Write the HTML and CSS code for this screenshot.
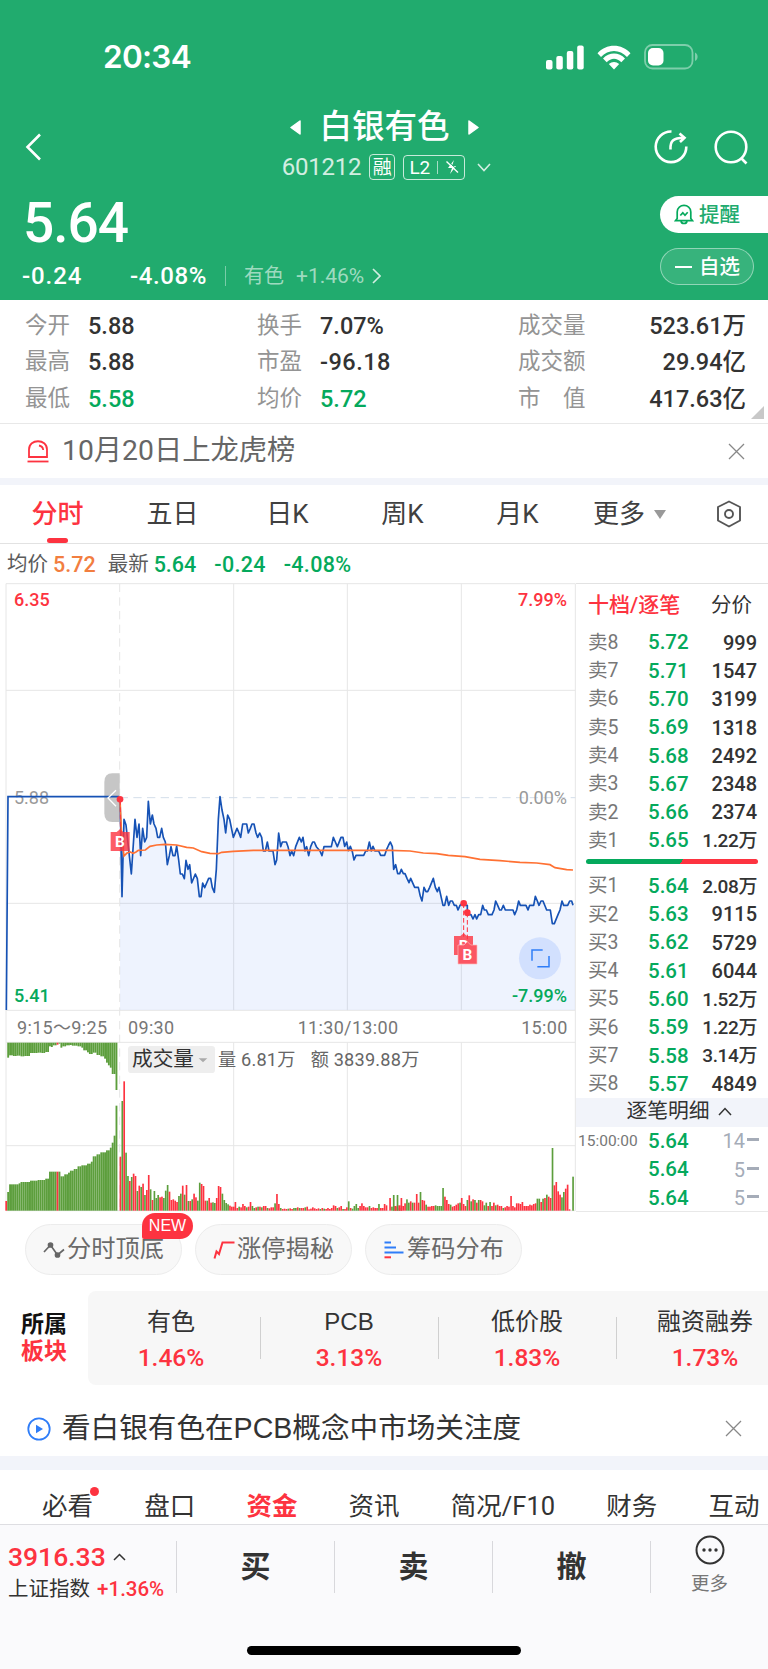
FILE: index.html
```html
<!DOCTYPE html>
<html lang="zh-CN">
  <head>
    <meta charset="UTF-8" />
    <title>白银有色 601212</title>
    <link rel="stylesheet" href="styles.css">
  </head>
  <body>
    <!-- 顶部行情 -->
    <header class="header">
      <div class="status-bar">
        <span class="clock">20:34</span>
        <div class="status-icons">
          <svg width="38" height="25" viewBox="0 0 38 25" fill="#fff">
            <rect x="0" y="15" width="6.5" height="9.5" rx="2" />
            <rect x="10.3" y="11" width="6.5" height="13.5" rx="2" />
            <rect x="20.8" y="6" width="6.5" height="18.5" rx="2" />
            <rect x="31.2" y="0.5" width="6.5" height="24" rx="2" />
          </svg>
          <svg width="34" height="25" viewBox="0 0 34 25" fill="#fff">
            <path d="M0.5 8.3 C9 -1.8 25 -1.8 33.5 8.3 L30 12 C23 4 11 4 4 12 Z" />
            <path d="M6 13.6 C12 6.8 22 6.8 28 13.6 L24.3 17.3 C20 12.6 14 12.6 9.7 17.3 Z" />
            <path d="M11.8 19 C15 16.2 19 16.2 22.2 19 L17 24.5 Z" />
          </svg>
          <svg width="54" height="26" viewBox="0 0 54 26">
            <rect x="1" y="1" width="47.5" height="23.5" rx="7.5" fill="none" stroke="#fff" stroke-opacity=".42" stroke-width="1.8" />
            <rect x="4" y="4" width="15.5" height="17.5" rx="5" fill="#fff" />
            <path d="M51 8.5 C54.5 10 54.5 15.5 51 17 Z" fill="#fff" fill-opacity=".42" />
          </svg>
        </div>
      </div>

      <div class="title-bar">
        <svg class="back" width="16" height="28" viewBox="0 0 16 28"><path d="M15 1.5 L2.500 14 L15 26.500" /></svg>
        <div class="title">
          <div class="name-row">
            <svg width="11" height="15" viewBox="0 0 11 15"><path d="M1 7.500 L10 1 V14 Z" fill="#fff" stroke="#fff" stroke-width="1.500" stroke-linejoin="round" /></svg>
            <h1>白银有色</h1>
            <svg width="11" height="15" viewBox="0 0 11 15"><path d="M10 7.500 L1 1 V14 Z" fill="#fff" stroke="#fff" stroke-width="1.500" stroke-linejoin="round" /></svg>
          </div>
          <div class="code-row">
            <span class="code">601212</span>
            <span class="tag">融</span>
            <span class="tag level">L2<i></i>
              <svg width="14" height="16" viewBox="0 0 14 16"><path d="M9 1 L3 9 H7 L5 15 L11 7 H7 Z" fill="#fff" /><path d="M1.500 2.500 L13 13.500" stroke="#fff" stroke-width="1.400" /><path d="M3 2 L13.500 12" stroke="#21ab6e" stroke-width="1" /></svg>
            </span>
            <svg class="chevron" width="14" height="9" viewBox="0 0 14 9"><path d="M1 1 L7 7.500 L13 1" /></svg>
          </div>
        </div>
        <div class="title-actions">
          <svg width="34" height="36" viewBox="0 0 34 36">
            <path d="M17.500 2.500 A15.300 15.300 0 1 0 32.300 17.500" />
            <path d="M16.500 20.500 C16 12 19 9 30 8.800" />
            <path d="M25.500 4.500 L30.500 8.800 L26 13" />
          </svg>
          <svg width="34" height="36" viewBox="0 0 34 36">
            <circle cx="17" cy="18" r="15.300" />
            <path d="M27 29 L32.500 34.500" />
          </svg>
        </div>
      </div>

      <div class="quote">
        <div class="quote-main">
          <div class="price">5.64</div>
          <div class="change">
            <span class="diff">-0.24</span>
            <span class="pct">-4.08%</span>
            <span class="industry">有色</span>
            <span class="industry-pct">+1.46%</span>
            <svg width="9" height="16" viewBox="0 0 9 16"><path d="M1 1 L8 8 L1 15" /></svg>
          </div>
        </div>
        <div class="quote-buttons">
          <button class="remind">
            <svg width="20" height="21" viewBox="0 0 20 21">
              <path d="M3.200 14.500 V8 C3.200 -0.800 16.800 -0.800 16.800 8 V14.500 L18.500 16.700 H1.500 Z" />
              <path d="M7 17 C7.500 20.300 12.500 20.300 13 17" />
              <path d="M6.300 11.500 L8.800 8.800 L11 11.300 L13.700 8.300" />
            </svg><span>提醒</span>
          </button>
          <button class="favorite"><i></i><span>自选</span></button>
        </div>
      </div>
    </header>

    <!-- 行情指标 -->
    <section class="stats">
      <span class="label">今开</span><span class="value">5.88</span>
      <span class="label">换手</span><span class="value">7.07%</span>
      <span class="label">成交量</span><span class="value right">523.61万</span>
      <span class="label">最高</span><span class="value">5.88</span>
      <span class="label">市盈</span><span class="value wide">-96.18</span>
      <span class="label">成交额</span><span class="value right">29.94亿</span>
      <span class="label">最低</span><span class="value green">5.58</span>
      <span class="label">均价</span><span class="value green">5.72</span>
      <span class="label">市　值</span><span class="value right">417.63亿</span>
    </section>

    <section class="notice">
      <svg width="22" height="23" viewBox="0 0 22 23" fill="none" stroke="#fd3340" stroke-width="1.800">
        <path d="M2 17 V9.500 C2 -1.500 20 -1.500 20 9.500 V17 Z" />
        <path d="M0.500 21.500 H21.500" />
        <path d="M12 5.500 C14.500 6 16 7.500 16.200 10" />
      </svg>
      <span>10月20日上龙虎榜</span>
      <svg class="close" width="17" height="17" viewBox="0 0 17 17"><path d="M1 1 L16 16 M16 1 L1 16" /></svg>
    </section>

    <!-- K线周期 -->
    <nav class="tabs">
      <span class="tab active">分时</span>
      <span class="tab">五日</span>
      <span class="tab">日K</span>
      <span class="tab">周K</span>
      <span class="tab">月K</span>
      <span class="tab-more">更多<i></i></span>
      <svg width="26" height="28" viewBox="0 0 26 28" fill="none" stroke="#555" stroke-width="1.900" stroke-linejoin="round">
        <path d="M13 1.500 L24 7 V20.500 L13 26.500 L2 20.500 V7 Z" />
        <circle cx="13" cy="14" r="4" />
      </svg>
    </nav>

    <div class="summary">
      <span>均价</span><b class="orange">5.72</b>
      <span class="latest">最新</span><b>5.64</b><b class="gap">-0.24</b><b class="gap">-4.08%</b>
    </div>

    <!-- 分时图 + 盘口 -->
    <main class="market">
      <svg class="chart" width="576" height="629" viewBox="0 39 1728 1887">
        <g class="grid">
          <path d="M18 41 H1726 M18 361 H1726 M18 1000 H1726 M18 1321 H1726 M18 1417 H1726 M18 1727 H1726 M18 1922 H1726" />
          <path d="M18 41 V1922 M701 41 V1321 M1042 41 V1321 M1384 41 V1321 M701 1417 V1922 M1042 1417 V1922 M1384 1417 V1922 M1726 41 V1922" />
          <path class="dashed" d="M359 41 V1922" />
          <path class="dashed zero" d="M359 683 H1726" />
        </g>
        <polygon id="area" fill="#3e73f0" fill-opacity=".085" />
        <text x="42" y="702" class="gray">5.88</text>
        <text x="1701" y="702" class="gray end">0.00%</text>
        <path d="M359 610 H337 Q313 610 313 636 V730 Q313 756 337 756 H359 Z" fill="#c6c6c6" />
        <path d="M19 1320 L24 680 H357" fill="none" stroke="#1652b5" stroke-width="5" />
        <polyline id="price-line" fill="none" stroke="#1652b5" stroke-width="5" stroke-linejoin="round" />
        <path d="M348 661 L324 684 L348 709" fill="none" stroke="#fff" stroke-width="4" />
        <polyline id="avg-line" fill="none" stroke="#ff7133" stroke-width="5" />
        <!-- 买入标记 -->
        <g class="marks">
          <path class="lead" d="M361 690 V780 M1391 1000 V1100 M1402 1028 V1120" />
          <circle cx="360" cy="688" r="10" />
          <circle cx="1391" cy="1000" r="10" />
          <circle cx="1402" cy="1028" r="10" />
          <path class="flag" d="M332 786 H350 L360 778 L370 786 H389 V843 H332 Z" />
          <text x="360" y="831">B</text>
          <path class="flag" d="M1362 1098 H1381 L1391 1090 L1401 1098 H1419 V1155 H1362 Z" />
          <text x="1391" y="1143">B</text>
          <path class="flag top" d="M1374 1125 H1392 L1402 1115 L1412 1125 H1431 V1182 H1374 Z" />
          <text x="1402" y="1171">B</text>
        </g>
        <circle cx="1620" cy="1165" r="63" fill="#d2e0fe" />
        <path d="M1596 1172 V1140 H1628 M1612 1190 H1647 V1158" fill="none" stroke="#2f7df8" stroke-width="4.500" />
        <text x="42" y="108" class="red">6.35</text>
        <text x="1701" y="108" class="red end">7.99%</text>
        <text x="42" y="1297" class="green">5.41</text>
        <text x="1701" y="1297" class="green end">-7.99%</text>
        <text x="51" y="1391" class="axis">9:15～9:25</text>
        <text x="384" y="1391" class="axis">09:30</text>
        <text x="1044" y="1391" class="axis middle">11:30/13:00</text>
        <text x="1703" y="1391" class="axis end">15:00</text>
        <g id="volume"></g>
        <rect x="384" y="1428" width="261" height="81" rx="10" fill="#eee" />
        <text x="396" y="1489" class="vol-name">成交量</text>
        <path d="M596 1465 H622 L609 1477 Z" fill="#aaa" />
        <text x="654" y="1488" class="vol-text">量 6.81万</text>
        <text x="932" y="1488" class="vol-text">额 3839.88万</text>
      </svg>

      <aside class="book">
        <div class="book-tabs"><b>十档/逐笔</b><span>分价</span></div>
        <div class="level-row"><span>卖8</span><b>5.72</b><em>999</em></div>
        <div class="level-row"><span>卖7</span><b>5.71</b><em>1547</em></div>
        <div class="level-row"><span>卖6</span><b>5.70</b><em>3199</em></div>
        <div class="level-row"><span>卖5</span><b>5.69</b><em>1318</em></div>
        <div class="level-row"><span>卖4</span><b>5.68</b><em>2492</em></div>
        <div class="level-row"><span>卖3</span><b>5.67</b><em>2348</em></div>
        <div class="level-row"><span>卖2</span><b>5.66</b><em>2374</em></div>
        <div class="level-row"><span>卖1</span><b>5.65</b><em class="wan">1.22万</em></div>
        <div class="ratio"></div>
        <div class="level-row"><span>买1</span><b>5.64</b><em class="wan">2.08万</em></div>
        <div class="level-row"><span>买2</span><b>5.63</b><em>9115</em></div>
        <div class="level-row"><span>买3</span><b>5.62</b><em>5729</em></div>
        <div class="level-row"><span>买4</span><b>5.61</b><em>6044</em></div>
        <div class="level-row"><span>买5</span><b>5.60</b><em class="wan">1.52万</em></div>
        <div class="level-row"><span>买6</span><b>5.59</b><em class="wan">1.22万</em></div>
        <div class="level-row"><span>买7</span><b>5.58</b><em class="wan">3.14万</em></div>
        <div class="level-row"><span>买8</span><b>5.57</b><em>4849</em></div>
        <div class="detail-title">逐笔明细<svg width="14" height="9" viewBox="0 0 14 9"><path d="M1 8 L7 1.500 L13 8" /></svg></div>
        <div class="level-row tick"><span>15:00:00</span><b>5.64</b><em>14<i></i></em></div>
        <div class="level-row tick"><span></span><b>5.64</b><em>5<i></i></em></div>
        <div class="level-row tick"><span></span><b>5.64</b><em>5<i></i></em></div>
      </aside>
    </main>

    <!-- 工具入口 -->
    <section class="tools">
      <div class="tool">
        <svg width="22" height="18" viewBox="0 0 22 18" fill="none" stroke="#666" stroke-width="1.700"><path d="M1 11 L7.500 4 L14.500 14 L21 8.500" /><circle cx="7.500" cy="4" r="2" fill="#666" /><circle cx="14.500" cy="14" r="2" fill="#666" /></svg>
        分时顶底
        <span class="new">NEW</span>
      </div>
      <div class="tool">
        <svg width="22" height="18" viewBox="0 0 22 18" fill="none" stroke="#fd3340" stroke-width="2"><path d="M1.500 17.500 L3.500 10.500 L6 13 L9.500 1.500 H21.500" /></svg>
        涨停揭秘
      </div>
      <div class="tool">
        <svg width="22" height="18" viewBox="0 0 22 18" fill="none" stroke-width="2"><path d="M1.500 1.500 H8 M1.500 6.500 H13 M1.500 11.500 H20.500" stroke="#2f7df8" /><path d="M1.500 16.300 H8" stroke="#fd3340" /></svg>
        筹码分布
      </div>
    </section>

    <!-- 所属板块 -->
    <section class="sectors">
      <div class="sectors-label">所属<br><b>板块</b></div>
      <div class="sector-list">
        <div class="sector"><span>有色</span><b>1.46%</b></div>
        <div class="sector"><span>PCB</span><b>3.13%</b></div>
        <div class="sector"><span>低价股</span><b>1.83%</b></div>
        <div class="sector"><span>融资融券</span><b>1.73%</b></div>
      </div>
    </section>

    <section class="notice topic">
      <svg width="24" height="24" viewBox="0 0 24 24"><circle cx="12" cy="12" r="10.700" fill="none" stroke="#2f7df8" stroke-width="1.800" /><path d="M9 7.800 L16 12 L9 16.200 Z" fill="#2f7df8" /></svg>
      <span>看白银有色在PCB概念中市场关注度</span>
      <svg class="close" width="17" height="17" viewBox="0 0 17 17"><path d="M1 1 L16 16 M16 1 L1 16" /></svg>
    </section>

    <nav class="subtabs">
      <span class="dot">必看</span>
      <span>盘口</span>
      <span class="active">资金</span>
      <span>资讯</span>
      <span>简况/F10</span>
      <span>财务</span>
      <span>互动</span>
    </nav>

    <!-- 底部交易栏 -->
    <footer class="bottom">
      <div class="trade-bar">
        <div class="index">
          <div class="index-value">3916.33<svg width="13" height="8" viewBox="0 0 13 8"><path d="M1 7 L6.500 1.500 L12 7" /></svg></div>
          <div class="index-name">上证指数 <b>+1.36%</b></div>
        </div>
        <div class="trade">买</div>
        <div class="trade">卖</div>
        <div class="trade">撤</div>
        <div class="more">
          <svg width="30" height="30" viewBox="0 0 30 30"><circle cx="15" cy="15" r="13.500" fill="none" stroke="#333" stroke-width="2" /><circle cx="9" cy="15" r="1.700" /><circle cx="15" cy="15" r="1.700" /><circle cx="21" cy="15" r="1.700" /></svg>
          <span>更多</span>
        </div>
      </div>
      <div class="home-indicator"></div>
    </footer>

    <script src="script.js"></script>
  </body>
</html>
```
FILE: styles.css
```css
* {
  box-sizing: border-box;
}

body {
  margin: 0;
  width: 768px;
  height: 1669px;
  overflow: hidden;
  background: #fff;
  color: #333;
  font-family: Roboto, "Noto Sans CJK SC", sans-serif;
  line-height: 1;
}

b,
em,
i {
  font-style: normal;
}

b {
  font-weight: 500;
}

svg {
  flex: none;
}

.green {
  color: #05a95c;
}

/* 顶部 */
.header {
  height: 300px;
  background: #21ab6e;
  color: #fff;
}

.status-bar {
  display: flex;
  justify-content: space-between;
  align-items: center;
  height: 107px;
  padding: 7px 70px 0 103px;
}

.clock {
  font-family: Inter, sans-serif;
  font-size: 31.5px;
  font-weight: 600;
  letter-spacing: -0.7px;
}

.status-icons {
  display: flex;
  align-items: center;
  gap: 13px;
}

.title-bar {
  display: flex;
  align-items: center;
  height: 80px;
  padding: 0 20px 0 25px;
}

.back,
.title-actions svg {
  fill: none;
  stroke: #fff;
  stroke-width: 2.6;
}

.title {
  flex: 1;
  display: flex;
  flex-direction: column;
  align-items: center;
  gap: 9px;
  padding: 0 0 5px 74px;
}

.name-row,
.code-row {
  display: flex;
  align-items: center;
}

.name-row {
  gap: 18px;
}

h1 {
  margin: 0;
  font-size: 32.5px;
  font-weight: 500;
  line-height: 36px;
}

.code-row {
  gap: 8px;
  padding-left: 4px;
}

.code {
  font-size: 24px;
  opacity: 0.8;
  letter-spacing: -0.2px;
}

.tag {
  display: flex;
  align-items: center;
  justify-content: center;
  width: 26px;
  height: 26px;
  border: 1px solid rgba(255, 255, 255, 0.75);
  border-radius: 4px;
  font-size: 19px;
}

.level {
  width: 62px;
  height: 25px;
  gap: 7px;
}

.level i {
  width: 1px;
  height: 13px;
  background: rgba(255, 255, 255, 0.6);
}

.chevron,
.change svg {
  margin-left: 4px;
  fill: none;
  stroke: #fff;
  stroke-opacity: 0.8;
  stroke-width: 1.6;
}

.change svg {
  margin-left: 8px;
}

.title-actions {
  display: flex;
  gap: 26px;
}

.quote {
  display: flex;
  justify-content: space-between;
}

.price {
  padding: 9px 0 0 23px;
  font-size: 55px;
  font-weight: 500;
  letter-spacing: -1px;
}

.change {
  display: flex;
  align-items: center;
  height: 26px;
  margin: 12px 0 0 22px;
  font-size: 24px;
  font-weight: 500;
}

.diff {
  width: 108px;
  letter-spacing: 0.9px;
}

.pct {
  width: 95px;
  letter-spacing: 0.6px;
}

.industry {
  padding-left: 18px;
  border-left: 1px solid rgba(255, 255, 255, 0.4);
  font-size: 20px;
  font-weight: 400;
  color: rgba(255, 255, 255, 0.58);
}

.industry-pct {
  margin-left: 12px;
  font-size: 21px;
  font-weight: 400;
  color: rgba(255, 255, 255, 0.58);
}

.quote-buttons {
  display: flex;
  flex-direction: column;
  gap: 15px;
  padding-top: 9px;
}

.quote-buttons button {
  display: flex;
  align-items: center;
  gap: 5px;
  height: 37px;
  padding: 0 0 0 14px;
  border: none;
  font: 500 20.5px/1 "Noto Sans CJK SC", sans-serif;
}

.quote-buttons span {
  padding-bottom: 2px;
}

.remind {
  width: 108px;
  border-radius: 19px 0 0 19px;
  background: #fff;
  color: #21ab6e;
}

.remind svg {
  fill: none;
  stroke: #05a95c;
  stroke-width: 1.7;
}

.quote-buttons .favorite {
  width: 94px;
  gap: 7px;
  border: 1px solid rgba(255, 255, 255, 0.45);
  border-radius: 19px;
  background: rgba(255, 255, 255, 0.1);
  color: #fff;
}

.favorite i {
  width: 17px;
  height: 2px;
  background: #fff;
}

/* 行情指标 */
.stats {
  position: relative;
  display: grid;
  grid-template-columns: 63px 169px 63px 198px 90px 138px;
  grid-template-rows: repeat(3, 36.7px);
  align-items: center;
  height: 124px;
  padding: 8px 22px 0 25px;
  border-bottom: 1px solid #e8e8e8;
}

.stats .label {
  font-size: 22.5px;
  font-weight: 400;
  color: #949494;
  white-space: nowrap;
  padding-bottom: 3px;
}

.stats .value {
  font-size: 23.5px;
  font-weight: 500;
}

.stats .wide {
  letter-spacing: 0.5px;
}

.stats .right {
  text-align: right;
}

/* 右下角展开三角 */
.stats::after {
  content: "";
  position: absolute;
  right: 4px;
  bottom: 4px;
  border-left: 13px solid transparent;
  border-bottom: 13px solid #c8c8c8;
}

.notice {
  display: flex;
  align-items: center;
  height: 61px;
  padding: 0 23px 0 27px;
  border-bottom: 7px solid #f2f4fa;
  font-size: 28.3px;
  font-weight: 400;
  color: #666;
}

.notice span {
  flex: 1;
  margin-left: 13px;
}

.close {
  fill: none;
  stroke: #888;
  stroke-width: 1.3;
}

/* 周期切换 */
.tabs {
  display: flex;
  align-items: center;
  height: 59px;
  border-bottom: 1px solid #e2e2e2;
  font-size: 26px;
  color: #404040;
}

.tab {
  display: flex;
  align-items: center;
  justify-content: center;
  position: relative;
  width: 115px;
  height: 58px;
}

.tab.active {
  font-weight: 500;
  color: #fd3340;
}

.tab.active::after {
  content: "";
  position: absolute;
  bottom: 0;
  left: 47px;
  width: 21px;
  height: 5px;
  border-radius: 3px;
  background: #fd3340;
}

.tab-more {
  display: flex;
  align-items: center;
  gap: 9px;
  width: 123px;
  margin-left: 18px;
}

.tab-more i {
  border: 6.5px solid transparent;
  border-top: 9px solid #999;
  border-bottom: none;
}

.summary {
  display: flex;
  align-items: center;
  height: 39px;
  padding: 2px 0 0 7px;
  font-size: 20.5px;
  color: #5c5c5c;
}

.summary b {
  margin-left: 5px;
  font-size: 21.5px;
  color: #05a95c;
}

.summary .orange {
  color: #f27e3f;
}

.summary .latest {
  margin-left: 12px;
}

.summary .gap {
  margin-left: 18px;
  letter-spacing: 0.3px;
}

/* 分时图 */
.market {
  display: flex;
  height: 629px;
}

.chart {
  display: block;
}

.chart text {
  font-size: 54px;
  font-weight: 500;
}

.grid path {
  fill: none;
  stroke: #e6e6e6;
  stroke-width: 3;
}

.grid .dashed {
  stroke-dasharray: 25 16;
}

.grid .zero {
  stroke: #d3deea;
}

.chart .red {
  fill: #fd3340;
}

.chart .green {
  fill: #05a95c;
}

.chart .gray {
  fill: #999;
  font-weight: 400;
}

.chart .axis {
  font-weight: 400;
  fill: #777;
  letter-spacing: 1px;
}

.chart .end {
  text-anchor: end;
}

.chart .middle {
  text-anchor: middle;
}

.chart .vol-name {
  font-size: 62px;
  font-weight: 400;
  fill: #333;
}

.chart .vol-text {
  font-size: 54.5px;
  font-weight: 400;
  fill: #666;
  letter-spacing: 0.6px;
}

.marks circle {
  fill: #fd3340;
}

.marks .lead {
  fill: none;
  stroke: #fd3340;
  stroke-width: 3;
  stroke-dasharray: 14 8;
}

.marks .flag {
  fill: #fd3340;
  fill-opacity: 0.8;
}

.marks .top {
  fill: #fb5663;
  fill-opacity: 1;
  stroke: #fbb;
  stroke-width: 2;
}

.marks text {
  fill: #fff;
  font-size: 46px;
  font-weight: 700;
  text-anchor: middle;
}

/* 十档 */
.book {
  width: 192px;
  border-top: 1px solid #e2e2e2;
  border-bottom: 1px solid #e8e8e8;
}

.book-tabs {
  display: flex;
  justify-content: space-between;
  align-items: center;
  height: 44px;
  padding: 0 16px 2px 12px;
  font-size: 20.5px;
  font-weight: 400;
}

.book-tabs b {
  font-size: 21px;
  color: #fd3340;
}

.level-row {
  display: flex;
  align-items: center;
  height: 28.3px;
  padding: 1px 11px 0 12px;
  font-size: 19.5px;
}

.level-row span {
  width: 60px;
  font-weight: 400;
  color: #777;
  white-space: nowrap;
}

.level-row b {
  font-size: 20.5px;
  color: #05a95c;
}

.level-row em {
  flex: 1;
  text-align: right;
  font-size: 20px;
  font-weight: 500;
}

.level-row .wan {
  font-size: 19px;
  letter-spacing: -0.4px;
}

.ratio {
  height: 5px;
  margin: 5px 10px 7px 10px;
  border-radius: 3px;
  background: linear-gradient(120deg, #05a95c 55.5%, #fd3340 55.5%);
}

.detail-title {
  display: flex;
  align-items: center;
  justify-content: center;
  gap: 8px;
  height: 29px;
  background: #f2f4fa;
  font-size: 20.8px;
  padding: 0 0 1px 14px;
}

.detail-title svg,
.index-value svg {
  fill: none;
  stroke: #333;
  stroke-width: 1.5;
}

.tick {
  padding-left: 2px;
  padding-right: 9px;
}

.tick span {
  width: 70px;
  font-size: 15.5px;
  font-weight: 400;
}

.tick em {
  display: flex;
  align-items: center;
  justify-content: flex-end;
  gap: 2px;
  font-weight: 400;
  color: #a5acb8;
}

.tick i {
  width: 12px;
  height: 3px;
  margin-bottom: 3px;
  background: #a5acb8;
}

/* 工具入口 */
.tools {
  display: flex;
  gap: 13px;
  padding: 12px 25px 0;
}

.tool {
  display: flex;
  align-items: center;
  justify-content: center;
  gap: 2px;
  position: relative;
  width: 157px;
  height: 51px;
  border: 1px solid #ececec;
  border-radius: 26px;
  background: #f8f8f8;
  font-size: 24.2px;
  font-weight: 400;
  color: #6a6a6a;
}

.new {
  position: absolute;
  top: -12px;
  left: 116px;
  width: 51px;
  height: 26px;
  border-radius: 13px 13px 13px 2px;
  background: #fd3340;
  font: 400 16px/26px "Liberation Sans", sans-serif;
  text-align: center;
  color: #fff;
}

/* 所属板块 */
.sectors {
  display: flex;
  height: 94px;
  margin-top: 16px;
}

.sectors-label {
  width: 88px;
  padding: 20px 0 0 21px;
  font-size: 23px;
  font-weight: 700;
  line-height: 27px;
  color: #111;
}

.sectors-label b {
  font-weight: 700;
  color: #fd3340;
}

.sector-list {
  display: flex;
  width: 680px;
  border-radius: 8px 0 0 8px;
  background: #f7f7f7;
  overflow: hidden;
}

.sector {
  flex: none;
  display: flex;
  flex-direction: column;
  align-items: center;
  gap: 12px;
  position: relative;
  width: 178px;
  padding-top: 19px;
  font-family: "Liberation Sans", "Noto Sans CJK SC", sans-serif;
  font-size: 24px;
  font-weight: 400;
}

.sector:first-child {
  margin-left: -6px;
}

.sector b {
  font: 500 24.5px/1 Roboto, sans-serif;
  color: #fd3340;
}

.sector + .sector::before {
  content: "";
  position: absolute;
  left: 0;
  top: 26px;
  width: 1px;
  height: 42px;
  background: #d0d0d0;
}

.topic {
  height: 85px;
  padding: 16px 26px 0 27px;
  border-bottom-width: 14px;
  font-family: "Liberation Sans", "Noto Sans CJK SC", sans-serif;
  font-size: 28.6px;
  color: #333;
}

.topic span {
  margin-left: 11px;
}

.subtabs {
  display: flex;
  gap: 51.2px;
  height: 54px;
  padding: 24px 0 0 42px;
  font-size: 25.5px;
  white-space: nowrap;
}

.subtabs .active {
  font-weight: 700;
  color: #fd3340;
}

.dot {
  position: relative;
}

.dot::after {
  content: "";
  position: absolute;
  top: -7px;
  right: -6px;
  width: 9px;
  height: 9px;
  border-radius: 50%;
  background: #fd3340;
}

/* 底部 */
.bottom {
  height: 146px;
  border-top: 1px solid #dedee2;
  background: #fafafc;
}

.trade-bar {
  display: flex;
  height: 121px;
  padding-top: 16px;
}

.index {
  width: 176px;
  padding: 3px 0 0 8px;
  white-space: nowrap;
}

.index-value {
  display: flex;
  align-items: center;
  gap: 7px;
  font-size: 26.5px;
  font-weight: 500;
  color: #fd3340;
}

.index-name {
  margin-top: 8px;
  font-size: 20.5px;
}

.index-name b {
  margin-left: 2px;
  color: #fd3340;
}

.trade {
  width: 158px;
  height: 52px;
  border-left: 1px solid #d8d8dc;
  font-size: 30px;
  font-weight: 700;
  line-height: 52px;
  text-align: center;
}

.more {
  display: flex;
  flex-direction: column;
  align-items: center;
  gap: 10px;
  width: 118px;
  height: 52px;
  border-left: 1px solid #d8d8dc;
}

.more svg {
  margin-top: -6px;
  fill: #333;
}

.more span {
  font-size: 18.5px;
  font-weight: 400;
  color: #777;
}

.home-indicator {
  width: 274px;
  height: 9px;
  margin: 0 auto;
  border-radius: 5px;
  background: #000;
}
```
FILE: script.js
```js
// 分时价格（图表坐标）
const morning =
  "360,688 362,770 366,980 372,748 378,765 388,857 394,912 405,748 411,802 417,762 422,857 428,775 434,816 440,802 445,694 451,762 457,735 462,762 468,775 473,802 479,802 485,775 490,802 496,816 502,884 508,857 513,830 519,857 525,857 530,828 536,870 541,912 547,912 553,926 558,871 564,898 569,884 575,939 586,912 592,926 598,980 603,980 608,939 614,953 620,939 626,925 632,925 637,953 643,967 649,898 655,748 660,680 666,720 672,748 677,789 683,735 689,748 700,802 711,775 717,789 722,802 728,762 740,762 745,789 751,775 756,762 762,762 768,789 773,802 779,789 785,802 790,843 796,843 802,816 807,843 819,843 825,884 830,870 836,789 842,830 847,816 859,816 864,830 870,857 875,843 881,857 887,830 898,802 904,816 909,802 915,843 920,830 926,857 932,830 938,816 943,816 949,830 960,843 966,857 972,830 994,830 1000,802 1006,816 1012,830 1018,815";
const afternoon =
  "1023,802 1029,802 1034,829 1040,816 1045,842 1051,829 1057,845 1062,870 1068,856 1091,856 1097,843 1102,843 1108,816 1114,843 1119,829 1125,843 1136,843 1142,856 1154,856 1160,838 1166,825 1171,816 1177,830 1181,898 1187,884 1193,911 1199,911 1204,898 1210,911 1215,911 1221,925 1227,938 1232,925 1244,952 1255,952 1261,979 1266,993 1272,952 1278,965 1283,965 1289,952 1300,925 1306,952 1312,965 1317,952 1323,979 1329,1006 1334,1006 1340,979 1346,1006 1351,993 1357,993 1363,1006 1369,1006 1374,1020 1380,1006 1391,1000 1396,1006 1402,1006 1402,1028 1408,1034 1413,1034 1419,1047 1425,1034 1430,1047 1436,1034 1442,1034 1448,1006 1453,1020 1459,1020 1465,1034 1476,1034 1482,1020 1487,993 1493,1006 1499,1020 1504,1020 1510,1006 1516,1020 1539,1020 1544,1034 1550,1020 1556,993 1561,1006 1578,1006 1584,1020 1589,1006 1601,1006 1606,979 1612,993 1617,1006 1623,993 1629,993 1640,1020 1651,1020 1657,1061 1663,1061 1674,1034 1680,1020 1686,993 1691,1006 1703,1006 1709,993 1715,993 1719,1006";
const avg =
  "360,688 365,800 372,858 380,850 390,846 400,850 408,846 415,841 436,840 450,829 470,825 495,823 530,825 560,832 580,834 605,845 630,850 655,851 665,847 700,844 760,841 1170,841 1230,843 1270,849 1310,851 1345,856 1395,860 1440,868 1500,872 1560,877 1610,879 1650,884 1665,893 1700,899 1719,900";

document.getElementById("price-line").setAttribute("points", morning + " " + afternoon);
document.getElementById("area").setAttribute("points", "360,1320 " + morning + " " + afternoon + " 1725,1006 1725,1320");
document.getElementById("avg-line").setAttribute("points", avg);

// 成交量
const BASE = 1922;
const STEP = 5.667;
const colors = { r: "#fd3340", g: "#5c9e3c" };
const volume = document.getElementById("volume");

function bar(x, y, h, color, w = 5) {
  const rect = document.createElementNS("http://www.w3.org/2000/svg", "rect");
  rect.setAttribute("x", x);
  rect.setAttribute("y", y);
  rect.setAttribute("width", w);
  rect.setAttribute("height", h);
  rect.setAttribute("fill", colors[color]);
  volume.appendChild(rect);
}

const segments = {
  361: "r162 g329 r388 g174 g104 r89 g101 r111 r104 g59 r75 g71 r81 g47 r62 r107 g64 r32 g59 g38 g47 r40 r42 g38 g60 g77 r57 r32 r34 r30 r26 g44 g51 r75 g48 r77 g29 r29 g34 r51 r40 g30 g84 r80 r74 r30 g30 r38 r24 g25 g23 r38 r74 r71 g51 g32 g23 g19 r15 r12 r12",
  706: "r26 r8 g12 r10 r20 r14 g10 r12 r26 g14 g8 r10 g12 r12 g10 r14 r14 g8 r7 r10 r10 g22 r50 r20 g8 r5 r6 r5 g6 r7 r5 g8 g8 r10 g8 r8 r8 g10 r12 r4 r6 r10 r7 r5 r7 g5 r8 g6 r5 r8 r5 r8 r16 r14 g8 r10 r14 g5 r5 r10",
  1046: "g28 r8 g6 g14 g20 g8 r14 r22 r14 r10 r10 g14 r8 r10 r8 r8 g20 r8 r8 r20 r16",
  1170: "r38 g12 r14 r12 r16 g8 r38",
  1181: "g47 r14 g47 r16 r16 r14 r22 g34 g24 r28 g24 r24",
  1250: "r50 r24 g56 r32 r30 g18 r12 r12 r14 r14 g16 g14 g14 g14",
  1329: "g68 r42 r32 r20 g18 r12 r14 r18 r22 g24",
  1385: "r38 r20 r14 g32 r46 g28 r34 g32 r24 g32 r32 r28 g16 g24 r14 g26 r14 r24 g16 r18 r14 r14 g8 r10 r14 r12",
  1533: "r44 r14 r10 r22 r22 r20 r26 r14 r14 r14 r18 r16 r20 r22",
  1612: "g36 g36 r26 g36 r38 g48 r42 r38 g188 r76 r86 r58 r48 g40 g56 r66 r78 r4",
  1719: "g102"
};
for (const start in segments) {
  segments[start].split(" ").forEach((item, i) => {
    const h = Number(item.slice(1));
    bar(Number(start) - 2.3 + i * STEP, BASE - h, h, item[0]);
  });
}

// 集合竞价：上方未匹配量，下方匹配量
function valueAt(points, x) {
  let value = points[0][1];
  for (const [px, v] of points) {
    if (px <= x) value = v;
  }
  return value;
}
const unmatched = [[22, 45], [28, 38], [38, 40], [48, 39], [60, 41], [72, 40], [88, 31], [112, 30], [124, 31], [136, 28], [145, 11], [150, 13], [156, 8], [168, 6], [173, 3], [179, 15], [185, 11], [196, 8], [208, 7], [214, 9], [230, 11], [240, 15], [247, 23], [258, 29], [264, 34], [275, 30], [285, 37], [297, 41], [308, 48], [314, 60], [320, 68], [325, 75], [331, 82], [336, 94], [346, 142]];
const matched = [[16, 29], [22, 56], [28, 79], [56, 82], [62, 86], [88, 90], [112, 92], [136, 96], [145, 117], [173, 117], [179, 103], [190, 109], [202, 114], [208, 120], [218, 125], [230, 133], [240, 136], [258, 141], [269, 147], [279, 163], [290, 169], [297, 175], [314, 181], [325, 189], [331, 200], [336, 204], [341, 225], [346, 315]];
for (let i = 0; i < 59; i++) {
  const x = 16 + i * 5.7;
  const red = i === 0 || i === 27;
  if (i > 0) bar(x, 1418, valueAt(unmatched, x + 1), red ? "r" : "g", 5.6);
  const h = valueAt(matched, x + 1);
  bar(x, BASE - h, h, red ? "r" : "g", 5.6);
}
```
